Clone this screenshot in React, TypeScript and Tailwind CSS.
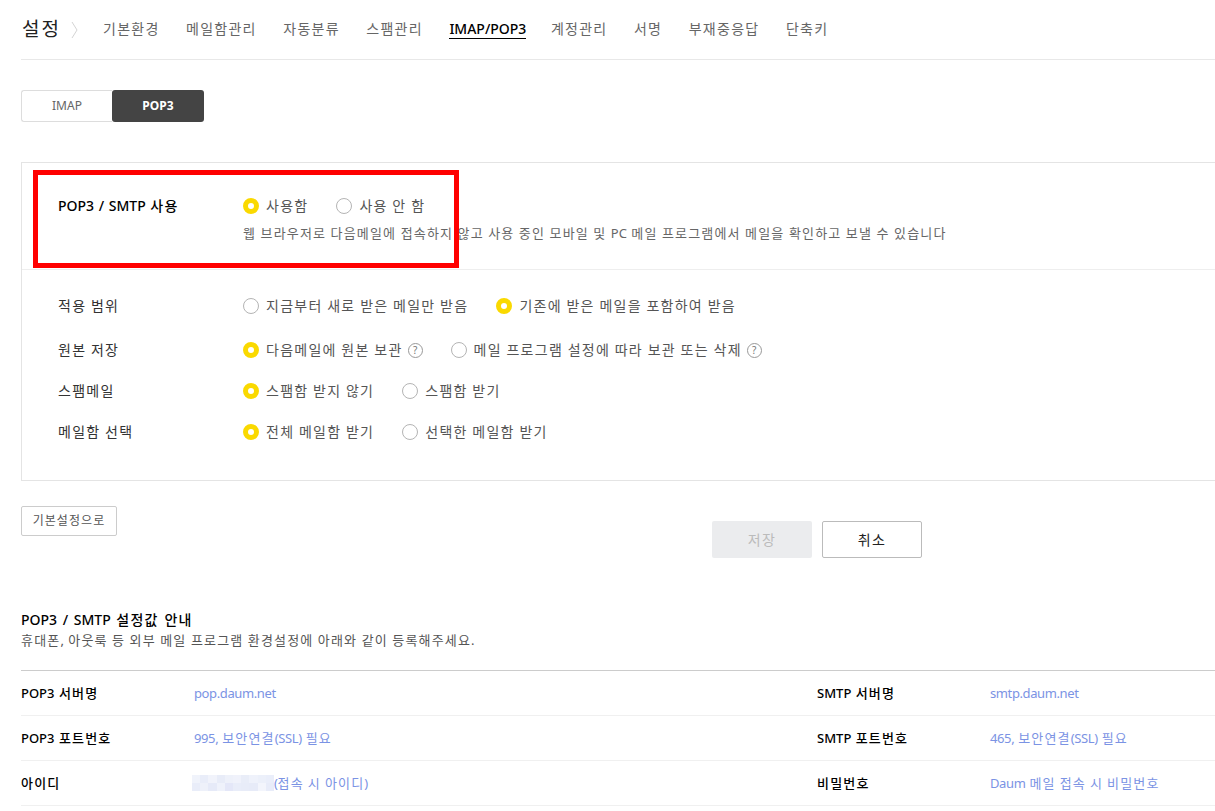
import React from 'react';

const font = "font-['Noto_Sans','Noto_Sans_CJK_KR',sans-serif]";

const tabs = ['기본환경', '메일함관리', '자동분류', '스팸관리', 'IMAP/POP3', '계정관리', '서명', '부재중응답', '단축키'];

// pixelated patch hiding the account id
const blurCells = [
  'bg-[#f0f3fb]', 'bg-[#e9edf9]', 'bg-[#f1f3fb]', 'bg-[#e8ecf8]', 'bg-[#eef1fa]', 'bg-[#f0f2fb]', 'bg-[#e9edf8]', 'bg-[#eff2fb]', 'bg-[#ecf0fa]', 'bg-[#eaeefa]',
  'bg-[#e9edf9]', 'bg-[#eef1fa]', 'bg-[#e6eaf8]', 'bg-[#eff2fb]', 'bg-[#e4e7f8]', 'bg-[#e9edf9]', 'bg-[#e8ecf8]', 'bg-[#e7ebf8]', 'bg-[#f3f5fc]', 'bg-[#e8ecf9]',
];

// hangul runs are set wider than latin, as in the original mail font
const Txt = ({ children }: { children: string }) => (
  <>
    {children.split(/([가-힣]+)/).map((part, i) =>
      /[가-힣]/.test(part) ? (
        <span key={i} className="tracking-[0.09em]">
          {part}
        </span>
      ) : (
        part
      ),
    )}
  </>
);

const Radio = ({ on, label, help }: { on?: boolean; label: string; help?: boolean }) => (
  <span className="flex items-center">
    <span
      className={
        on
          ? 'h-4 w-4 rounded-full border-[5px] border-[#fad900] bg-white'
          : 'h-4 w-4 rounded-full border border-[#b4b4b4] bg-white'
      }
    />
    <span className="ml-[7px] whitespace-nowrap text-sm leading-5 text-[#555]">
      <Txt>{label}</Txt>
    </span>
    {help && (
      <span className="ml-[5px] flex h-[15px] w-[15px] items-center justify-center rounded-full border border-[#999] text-[10px] leading-none text-[#777]">
        ?
      </span>
    )}
  </span>
);

const OptionRow = ({ label, className, children }: { label: string; className: string; children: React.ReactNode }) => (
  <div className={`flex items-center ${className}`}>
    <div className="w-[185px] shrink-0 text-sm leading-5 text-[#333]">
      <Txt>{label}</Txt>
    </div>
    <div className="flex items-center gap-7">{children}</div>
  </div>
);

const InfoCell = ({ label, value, width, blur }: { label: string; value: string; width: string; blur?: boolean }) => (
  <div className={`flex items-center ${width}`}>
    <div className="w-[173px] shrink-0 text-[13px] font-medium leading-5 text-black">
      <Txt>{label}</Txt>
    </div>
    <div className="flex items-center whitespace-nowrap text-[13px] leading-5 tracking-[-0.03em] text-[#7b93e4]">
      {blur && (
        <span className="ml-[-2px] grid h-4 w-[82px] grid-cols-10 grid-rows-2">
          {blurCells.map((c, i) => (
            <span key={i} className={c} />
          ))}
        </span>
      )}
      <span>
        <Txt>{value}</Txt>
      </span>
    </div>
  </div>
);

export default function App() {
  return (
    <div className={`relative h-[811px] w-[1215px] overflow-hidden bg-white pl-[21px] [word-spacing:1px] ${font}`}>
      <header className="flex h-[60px] items-center border-b border-[#e8e8e8]">
        <h1 className="ml-px w-[38px] whitespace-nowrap text-[19px] font-normal tracking-[2px] text-[#222]">설정</h1>
        <svg width="8" height="18" viewBox="0 0 8 18" className="ml-[11px] mr-[24px]" fill="none" stroke="#d4d4d4">
          <path d="M1 1l5 8-5 8" />
        </svg>
        <nav className="flex items-center gap-[26.5px]">
          {tabs.map((t) => (
            <span
              key={t}
              className={
                t === 'IMAP/POP3'
                  ? '-mr-[2px] border-b border-black text-sm font-medium leading-[18px] text-black'
                  : 'border-b border-transparent text-sm leading-[18px] tracking-[0.09em] text-[#666]'
              }
            >
              {t}
            </span>
          ))}
        </nav>
      </header>

      <div className="mt-[30px] flex h-8 w-[183px] text-xs">
        <div className="flex w-[91px] items-center justify-center rounded-l-[3px] border border-r-0 border-[#ddd] text-[#666]">IMAP</div>
        <div className="flex w-[92px] items-center justify-center rounded-[3px] bg-[#444] font-bold text-white">POP3</div>
      </div>

      <section className="mt-10 h-[319px] border border-r-0 border-[#e4e4e4]">
        <div className="h-[107px] border-b border-[#eee] pl-[36px] pt-[33px]">
          <div className="flex items-center">
            <div className="w-[185px] shrink-0 text-sm font-medium leading-5 text-black">
              <Txt>POP3 / SMTP 사용</Txt>
            </div>
            <div className="flex items-center gap-7">
              <Radio on label="사용함" />
              <Radio label="사용 안 함" />
            </div>
          </div>
          <p className="ml-[185px] mt-[7px] whitespace-nowrap text-[13px] leading-5 text-[#666]">
            <Txt>웹 브라우저로 다음메일에 접속하지 않고 사용 중인 모바일 및 PC 메일 프로그램에서 메일을 확인하고 보낼 수 있습니다</Txt>
          </p>
        </div>
        <div className="pl-[36px]">
          <OptionRow label="적용 범위" className="mt-[26px]">
            <Radio label="지금부터 새로 받은 메일만 받음" />
            <Radio on label="기존에 받은 메일을 포함하여 받음" />
          </OptionRow>
          <OptionRow label="원본 저장" className="mt-6">
            <Radio on help label="다음메일에 원본 보관" />
            <Radio help label="메일 프로그램 설정에 따라 보관 또는 삭제" />
          </OptionRow>
          <OptionRow label="스팸메일" className="mt-[21px]">
            <Radio on label="스팸함 받지 않기" />
            <Radio label="스팸함 받기" />
          </OptionRow>
          <OptionRow label="메일함 선택" className="mt-[21px]">
            <Radio on label="전체 메일함 받기" />
            <Radio label="선택한 메일함 받기" />
          </OptionRow>
        </div>
      </section>

      <div className="mt-[25px] flex items-start">
        <button className="h-[30px] w-[96px] rounded-[2px] border border-[#ccc] text-xs tracking-[0.09em] text-[#555]">기본설정으로</button>
        <div className="ml-[595px] mt-[15px] flex gap-[10px]">
          <button className="h-[37px] w-[100px] rounded-[2px] bg-[#ebecee] text-sm tracking-[0.09em] text-[#bbb]">저장</button>
          <button className="h-[37px] w-[100px] rounded-[2px] border border-[#bbb] text-sm tracking-[0.09em] text-[#222]">취소</button>
        </div>
      </div>

      <h2 className="mt-[52px] text-sm font-medium leading-5 text-black [word-spacing:2px]">
        <Txt>POP3 / SMTP 설정값 안내</Txt>
      </h2>
      <p className="text-[13px] leading-5 text-[#555]">
        <Txt>휴대폰, 아웃룩 등 외부 메일 프로그램 환경설정에 아래와 같이 등록해주세요.</Txt>
      </p>

      <div className="mt-5 border-t border-[#ccc]">
        {[
          ['POP3 서버명', 'pop.daum.net', 'SMTP 서버명', 'smtp.daum.net'],
          ['POP3 포트번호', '995, 보안연결(SSL) 필요', 'SMTP 포트번호', '465, 보안연결(SSL) 필요'],
          ['아이디', '(접속 시 아이디)', '비밀번호', 'Daum 메일 접속 시 비밀번호'],
        ].map((row, i) => (
          <div key={row[0]} className="flex h-[45px] items-center border-b border-[#f0f0f0]">
            <InfoCell label={row[0]} value={row[1]} width="w-[796px]" blur={i === 2} />
            <InfoCell label={row[2]} value={row[3]} width="flex-1" />
          </div>
        ))}
      </div>

      {/* highlight box drawn over the screenshot */}
      <div className="absolute left-[33px] top-[170px] h-[98px] w-[426px] border-[5px] border-[#ff0000]" />
    </div>
  );
}
